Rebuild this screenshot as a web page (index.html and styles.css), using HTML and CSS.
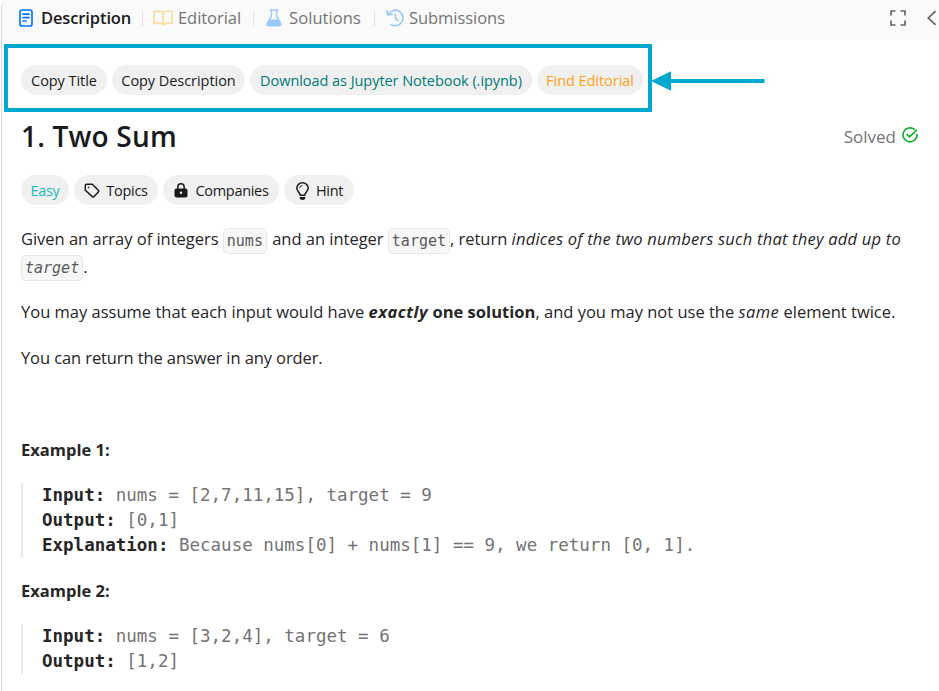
FILE: index.html
```html
<!DOCTYPE html>
<html lang="en">
<head>
<meta charset="utf-8">
<title>1. Two Sum</title>
<link rel="stylesheet" href="styles.css">
</head>
<body>
<div class="panel">
  <header class="tabs">
    <div class="tab tab-description active">
      <svg width="14" height="18" viewBox="0 0 14 18" fill="none" stroke="#007aff" stroke-width="1.7" stroke-linecap="round"><rect x="1" y="1" width="12" height="16" rx="2"/><path d="M4 5.2h6M4 8.6h6M4 12h3"/></svg>
      <span>Description</span>
    </div>
    <i class="divider"></i>
    <div class="tab tab-editorial">
      <svg width="20" height="16" viewBox="0 0 20 16" fill="none" stroke="#fbdc98" stroke-width="1.6" stroke-linejoin="round"><path d="M10 2.8C9 1.6 8 1.2 6.5 1.2H1v12.2h6.2c1.3 0 2 .3 2.8 1.3.8-1 1.5-1.3 2.8-1.3H19V1.2h-5.500C12 1.2 11 1.6 10 2.8zM10 2.8v11.9"/></svg>
      <span>Editorial</span>
    </div>
    <i class="divider"></i>
    <div class="tab tab-solutions">
      <svg width="16" height="18" viewBox="0 0 16 18"><path d="M4 1h8M5.4 1v6L1.4 14.3Q.3 16.7 3 16.7H13q2.700 0 1.6-2.4L10.6 7V1" fill="none" stroke="#99c8ff" stroke-width="1.5" stroke-linecap="round"/><path d="M4 10.500h8l2.600 4.200q.5 2-1.600 2H3q-2.100 0-1.600-2z" fill="#99c8ff"/></svg>
      <span>Solutions</span>
    </div>
    <i class="divider"></i>
    <div class="tab tab-submissions">
      <svg width="18" height="18" viewBox="0 0 18 18" fill="none" stroke="#99c8ff" stroke-width="1.6" stroke-linecap="round" stroke-linejoin="round"><path d="M2.400 5A7.800 7.800 0 1 1 5 15.600M1 1.600l.7 4.400 4.400-.7M9.400 5v4.300l2.600 2.400"/></svg>
      <span>Submissions</span>
    </div>
    <div class="controls">
      <svg width="16" height="16" viewBox="0 0 16 16" fill="none" stroke="#666" stroke-width="1.7"><path d="M1 5.500V1h4.500M10.500 1H15v4.500M15 10.500V15h-4.500M5.500 15H1v-4.500"/></svg>
      <svg width="9" height="16" viewBox="0 0 9 16" fill="none" stroke="#666" stroke-width="1.7"><path d="M8.500 1.200 1.300 8l7.200 6.800"/></svg>
    </div>
  </header>

  <section class="toolbar">
    <button class="pill copy-title">Copy Title</button>
    <button class="pill copy-description">Copy Description</button>
    <button class="pill download">Download as Jupyter Notebook (.ipynb)</button>
    <button class="pill find">Find Editorial</button>
    <svg class="arrow" width="114" height="20" viewBox="0 0 114 20" fill="#00a8cf"><path d="M0 10 20 .3v7.700h93.500v4H20v7.700z"/></svg>
  </section>

  <main class="content">
    <div class="heading">
      <h1>1. Two Sum</h1>
      <div class="solved"><span>Solved</span>
        <svg width="16" height="16" viewBox="0 0 16 16" fill="none" stroke="#02b128" stroke-width="1.6" stroke-linecap="round" stroke-linejoin="round"><path d="M12.400 2.400A7 7 0 1 0 15 7.300M5 7.500l2.600 2.400L14.500 3.200"/></svg>
      </div>
    </div>
    <div class="tags">
      <span class="pill easy">Easy</span>
      <span class="pill topics"><svg width="16" height="16" viewBox="0 0 16 16" fill="none" stroke="#1a1a1a" stroke-width="1.5" stroke-linejoin="round"><path d="M1.300 2.500Q1.300 1.200 2.600 1.200H8.300L14.300 7.200Q15.200 8.100 14.300 9L10 13.600Q9.200 14.400 8.400 13.600L1.300 7.200z"/><circle cx="4.600" cy="4.500" r=".5" fill="#1a1a1a" stroke-width=".8"/></svg>Topics</span>
      <span class="pill companies"><svg width="14" height="15" viewBox="0 0 14 15"><path d="M3.800 6V4a3.200 3.200 0 0 1 6.400 0v2" fill="none" stroke="#1a1a1a" stroke-width="1.5"/><rect x=".5" y="5.500" width="13" height="9" rx="2" fill="#1a1a1a"/><circle cx="7" cy="9.700" r="1.200" fill="#f0f0f0"/></svg>Companies</span>
      <span class="pill hint"><svg width="13" height="18" viewBox="0 0 13 18"><path d="M4.200 13.200c0-2.500-3.400-3.600-3.400-7.200a5.700 5.200 0 0 1 11.400 0c0 3.600-3.400 4.700-3.400 7.200z" fill="none" stroke="#1a1a1a" stroke-width="1.5" stroke-linejoin="round"/><path d="M3.600 6.200A2.900 2.900 0 0 1 6.200 3.600" fill="none" stroke="#1a1a1a"/><path d="M3.700 15h5.600v.8a2.800 2.100 0 0 1-5.600 0z" fill="#1a1a1a"/></svg>Hint</span>
    </div>

    <p class="intro">Given an array of integers <code class="name">nums</code> and an integer <code>target</code>, return <em>indices of the two numbers such that they add up to <code>target</code></em>.</p>
    <p class="assume">You may assume that each input would have <strong><em>exactly</em> one solution</strong>, and you may not use the <em>same</em> element twice.</p>
    <p class="order">You can return the answer in any order.</p>

    <h2>Example 1:</h2>
<pre><b>Input:</b> nums = [2,7,11,15], target = 9
<b>Output:</b> [0,1]
<b>Explanation:</b> Because nums[0] + nums[1] == 9, we return [0, 1].</pre>
    <h2>Example 2:</h2>
<pre><b>Input:</b> nums = [3,2,4], target = 6
<b>Output:</b> [1,2]</pre>
  </main>
</div>
</body>
</html>
```
FILE: styles.css
```css
* { box-sizing: border-box; }

body {
  margin: 0;
  background: #fff;
  color: #262626;
  font-family: "Open Sans", "Noto Sans", sans-serif;
  overflow: hidden;
}

svg { display: block; flex: none; }

.panel {
  height: 691px;
  margin-left: 1px;
  border-left: 1px solid #d6d6d6;
  border-top-left-radius: 8px;
  overflow: hidden;
}

.tabs {
  display: flex;
  align-items: center;
  height: 40px;
  padding: 0 3px 4px 17px;
  background: #fafafa;
}

.tab {
  display: flex;
  align-items: center;
  gap: 7px;
  color: #737373;
  font-size: 16.5px;
  line-height: 24px;
  white-space: nowrap;
}

.tab-description { width: 113px; gap: 8px; letter-spacing: -0.12px; }
.tab-editorial { width: 90px; gap: 5px; letter-spacing: -0.05px; }
.tab-solutions { width: 100px; padding-left: 2px; letter-spacing: 0.08px; }
.tab-submissions { gap: 5px; padding-left: 1px; letter-spacing: -0.05px; }

.active { color: #1a1a1a; font-weight: 600; }

.divider {
  width: 1px;
  height: 15px;
  margin: 0 10px;
  background: #e2e2e2;
}

.controls {
  display: flex;
  align-items: center;
  gap: 21px;
  margin-left: auto;
}

.toolbar {
  position: relative;
  display: flex;
  align-items: center;
  gap: 5px;
  width: 648px;
  height: 68px;
  margin: 4px 0 0 2px;
  padding: 3px 0 0 13px;
  border: 4px solid #00a8cf;
}

.arrow { position: absolute; left: 643px; top: 22.5px; }

.pill {
  display: flex;
  align-items: center;
  justify-content: center;
  height: 30px;
  padding: 1px 0 0;
  border: 0;
  border-radius: 15px;
  background: #f0f0f0;
  color: #1a1a1a;
  font: 14.5px/30px "Open Sans", "Noto Sans", sans-serif;
  letter-spacing: -0.05px;
  white-space: nowrap;
}

.toolbar .pill { padding-top: 2px; line-height: 28px; }
.copy-title { width: 86px; }
.copy-description { width: 133px; }
.download { width: 282px; color: #007a78; }
.find { width: 106px; color: #ffa116; }

.content { padding: 0 21px 0 19px; }

.heading {
  display: flex;
  align-items: center;
  justify-content: space-between;
  height: 50px;
  padding-bottom: 2px;
}

h1 {
  margin: 0;
  font-size: 28px;
  font-weight: 600;
  line-height: 40px;
  letter-spacing: 0.2px;
  color: #1a1a1a;
}

.solved {
  display: flex;
  align-items: center;
  gap: 6px;
  color: #737373;
  font-size: 17px;
}

.solved svg { margin-top: -3px; }

.tags { display: flex; gap: 5px; margin-top: 13px; }
.tags .pill { letter-spacing: -0.3px; }
.easy { width: 48px; color: #1cbaba; }
.topics { width: 84px; gap: 6px; }
.companies { width: 116px; gap: 7px; padding-left: 1px; }
.hint { width: 70px; gap: 7px; padding-left: 1px; }

p {
  margin: 0;
  font-size: 16.5px;
  line-height: 28px;
  letter-spacing: -0.02px;
  white-space: nowrap;
}

p em { letter-spacing: 0.22px; }
strong { letter-spacing: 0.03px; }
strong em { letter-spacing: 0.5px; }

.intro { width: 890px; margin-top: 20px; white-space: normal; }
.assume { margin-top: 17px; letter-spacing: 0; }
.assume > em { letter-spacing: 0.4px; }
.order { margin-top: 18px; letter-spacing: -0.1px; }

code {
  padding: 3px;
  border: 1px solid #e8e8e8;
  border-radius: 5px;
  background: #f7f7f7;
  color: #595959;
  font: 15px/1 "DejaVu Sans Mono", monospace;
  letter-spacing: 0;
  vertical-align: -1px;
}

.name { margin-right: 1px; }

em code { font-style: italic; vertical-align: 0; }

h2 {
  margin: 64px 0 0;
  font-size: 16.5px;
  font-weight: 700;
  line-height: 28px;
  letter-spacing: 0;
}

pre {
  margin: 19px 0 0;
  padding-left: 19px;
  border-left: 2px solid #e8e8e8;
  color: #737373;
  font: 17.5px/25px "DejaVu Sans Mono", monospace;
}

pre + h2 { margin-top: 19px; }
pre b { color: #262626; }
```
